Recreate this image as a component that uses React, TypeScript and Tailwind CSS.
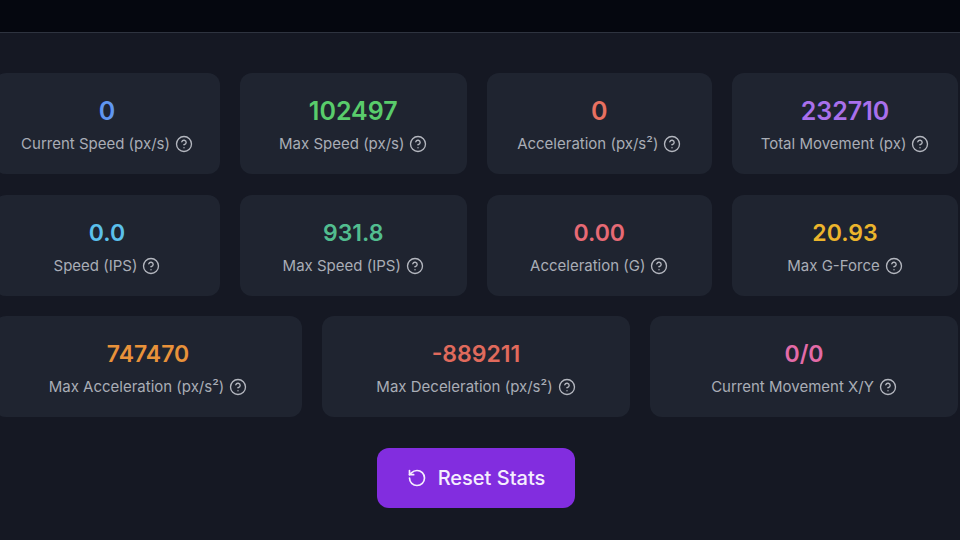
import { CircleHelp, RotateCcw } from "lucide-react";

const rows = [
  [
    { value: "0", label: "Current Speed (px/s)", color: "text-[#6096f0]", width: "w-[226px]", size: "text-[25px]" },
    { value: "102497", label: "Max Speed (px/s)", color: "text-[#59cc6b]", width: "w-[226.5px]", size: "text-[25px]" },
    { value: "0", label: "Acceleration (px/s²)", color: "text-[#e87060]", width: "w-[225.5px]", size: "text-[25px]" },
    { value: "232710", label: "Total Movement (px)", color: "text-[#a970ec]", width: "w-[226px]", size: "text-[25px]" },
  ],
  [
    { value: "0.0", label: "Speed (IPS)", color: "text-[#5bc0eb]", width: "w-[226px]", size: "text-[23px]" },
    { value: "931.8", label: "Max Speed (IPS)", color: "text-[#52bd8f]", width: "w-[226.5px]", size: "text-[23px]" },
    { value: "0.00", label: "Acceleration (G)", color: "text-[#e76a75]", width: "w-[225.5px]", size: "text-[23px]" },
    { value: "20.93", label: "Max G-Force", color: "text-[#ecb52c]", width: "w-[226px]", size: "text-[23px]" },
  ],
  [
    { value: "747470", label: "Max Acceleration (px/s²)", color: "text-[#e8923a]", width: "w-[308px]", size: "text-[23px]" },
    { value: "-889211", label: "Max Deceleration (px/s²)", color: "text-[#e06a5c]", width: "w-[308px]", size: "text-[23px]" },
    { value: "0/0", label: "Current Movement X/Y", color: "text-[#e36ba8]", width: "w-[308px]", size: "text-[23px]" },
  ],
];

function StatCard({ value, label, color, width, size }: { value: string; label: string; color: string; width: string; size: string }) {
  return (
    <div className={`${width} h-[101px] shrink-0 rounded-xl bg-[#1f2430] flex flex-col items-center pt-[22px]`}>
      <div className={`${size} leading-[32px] font-semibold ${color}`}>{value}</div>
      <div className="mt-[7px] flex items-center gap-[5px] text-[15px] leading-[20px] text-[#a9adb6]">
        <span>{label}</span>
        <CircleHelp className="w-[18px] h-[18px] text-[#b4b7bf]" strokeWidth={1.8} />
      </div>
    </div>
  );
}

export default function App() {
  return (
    <div className="w-[960px] h-[540px] overflow-hidden bg-[#151823] font-['Inter',sans-serif]">
      <div className="h-[33px] bg-[#05070f] border-b border-[#2e333f]" />
      <div className="ml-[-6px] w-[964px] pt-[40px] flex flex-col gap-[20.5px]">
        {rows.map((row, i) => (
          <div key={i} className="flex justify-between">
            {row.map((s) => (
              <StatCard key={s.label} {...s} />
            ))}
          </div>
        ))}
        <div className="flex justify-center pt-[10.5px]">
          <button
            type="button"
            className="w-[198px] h-[60px] rounded-xl bg-[#822ddf] text-[#f5eefd] text-xl font-medium flex items-center justify-center gap-[11px]"
          >
            <RotateCcw className="w-[20px] h-[20px]" strokeWidth={2} />
            Reset Stats
          </button>
        </div>
      </div>
    </div>
  );
}
